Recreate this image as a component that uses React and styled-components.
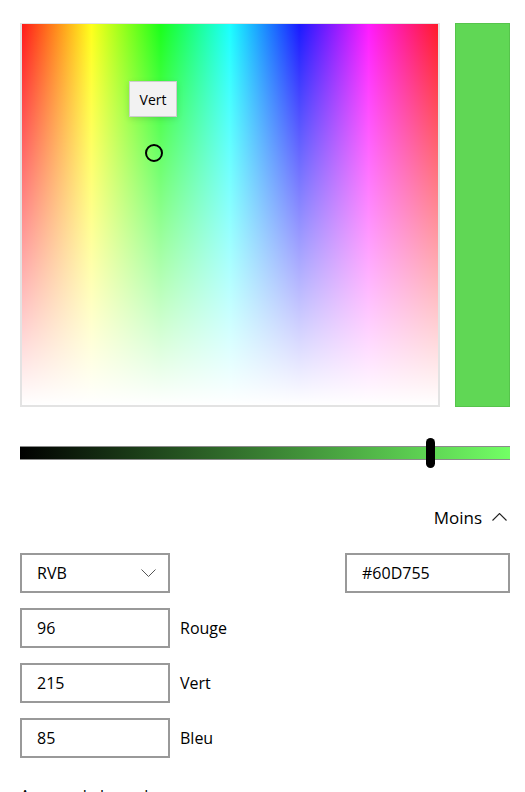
import React from "react";
import styled, { createGlobalStyle } from "styled-components";

const GlobalStyle = createGlobalStyle`
  html, body {
    margin: 0;
    padding: 0;
    background: #ffffff;
  }
  body {
    font-family: "Open Sans", "Noto Sans", sans-serif;
    color: #000;
    overflow: hidden;
  }
`;

const Page = styled.div`
  width: 525px;
  height: 792px;
  box-sizing: border-box;
  padding: 23px 15px 0 20px;
  overflow: hidden;
`;

const TopRow = styled.div`
  display: flex;
  gap: 15px;
`;

const Spectrum = styled.div`
  position: relative;
  width: 420px;
  height: 384px;
  box-sizing: border-box;
  border: 2px solid #e3e3e3;
  border-top-width: 1px;
  background:
    linear-gradient(to bottom, rgba(255, 255, 255, 0) 0%, rgba(255, 255, 255, 1) 100%),
    linear-gradient(
      to right,
      #ff1a1a 0%,
      #ffff1a 16.66%,
      #1aff1a 33.33%,
      #1affff 50%,
      #1a1aff 66.66%,
      #ff1aff 83.33%,
      #ff1a2a 100%
    );
`;

const Preview = styled.div`
  width: 55px;
  height: 384px;
  box-sizing: border-box;
  background: ${(p) => p.color};
  border: 1px solid #56c44c;
`;

const Tooltip = styled.div`
  position: absolute;
  left: 107px;
  top: 57px;
  width: 48px;
  height: 36px;
  box-sizing: border-box;
  display: flex;
  align-items: center;
  justify-content: center;
  background: #f2f2f2;
  border: 1px solid #cccccc;
  box-shadow: 0 2px 6px rgba(0, 0, 0, 0.12);
  font-size: 14px;
`;

const Ring = styled.div`
  position: absolute;
  left: 123px;
  top: 120px;
  width: 18px;
  height: 18px;
  box-sizing: border-box;
  border: 2.5px solid #000;
  border-radius: 50%;
`;

const SliderWrap = styled.div`
  position: relative;
  width: 490px;
  height: 30px;
  margin-top: 31px;
  display: flex;
  align-items: center;
`;

const Track = styled.div`
  width: 100%;
  height: 14px;
  box-sizing: border-box;
  border-top: 1px solid #8a8a8a;
  border-bottom: 1px solid #8a8a8a;
  background: linear-gradient(to right, #000000, ${(p) => p.end});
`;

const Thumb = styled.div`
  position: absolute;
  left: 406px;
  top: 0;
  width: 9px;
  height: 30px;
  border-radius: 5px;
  background: #000;
`;

const MoreRow = styled.div`
  display: flex;
  justify-content: flex-end;
  align-items: center;
  gap: 10px;
  height: 20px;
  margin-top: 39px;
  padding-right: 3px;
  font-size: 17px;
`;

const Form = styled.div`
  display: flex;
  flex-direction: column;
  gap: 15px;
  margin-top: 26px;
`;

const FieldRow = styled.div`
  display: flex;
  align-items: center;
  justify-content: space-between;
`;

const FieldGroup = styled.div`
  display: flex;
  align-items: center;
  gap: 10px;
`;

const Box = styled.div`
  width: ${(p) => p.w || 150}px;
  height: 40px;
  box-sizing: border-box;
  border: 2px solid #999999;
  display: flex;
  align-items: center;
  justify-content: space-between;
  padding: 0 12px 0 15px;
  font-size: 16px;
  background: #fff;
`;

const Label = styled.span`
  font-size: 16px;
`;

const Footer = styled.div`
  margin-top: 27px;
  font-size: 16px;
`;

function ChevronDown() {
  return (
    <svg width="15" height="8" viewBox="0 0 15 8" fill="none">
      <path d="M0.5 0.5 L7.5 7.5 L14.5 0.5" stroke="#555" strokeWidth="1" />
    </svg>
  );
}

function ChevronUp() {
  return (
    <svg width="15" height="8" viewBox="0 0 15 8" fill="none">
      <path d="M0.5 7.5 L7.5 0.5 L14.5 7.5" stroke="#222" strokeWidth="1.1" />
    </svg>
  );
}

const channels = [
  { value: "96", label: "Rouge" },
  { value: "215", label: "Vert" },
  { value: "85", label: "Bleu" },
];

export default function App() {
  return (
    <>
      <GlobalStyle />
      <Page>
        <TopRow>
          <Spectrum>
            <Tooltip>Vert</Tooltip>
            <Ring />
          </Spectrum>
          <Preview color="#60D755" />
        </TopRow>

        <SliderWrap>
          <Track end="#72ff65" />
          <Thumb />
        </SliderWrap>

        <MoreRow>
          <span>Moins</span>
          <ChevronUp />
        </MoreRow>

        <Form>
          <FieldRow>
            <Box>
              <span>RVB</span>
              <ChevronDown />
            </Box>
            <Box w={165}>#60D755</Box>
          </FieldRow>
          {channels.map((c) => (
            <FieldGroup key={c.label}>
              <Box>{c.value}</Box>
              <Label>{c.label}</Label>
            </FieldGroup>
          ))}
        </Form>

        <Footer>Aperçu de la couleur</Footer>
      </Page>
    </>
  );
}
